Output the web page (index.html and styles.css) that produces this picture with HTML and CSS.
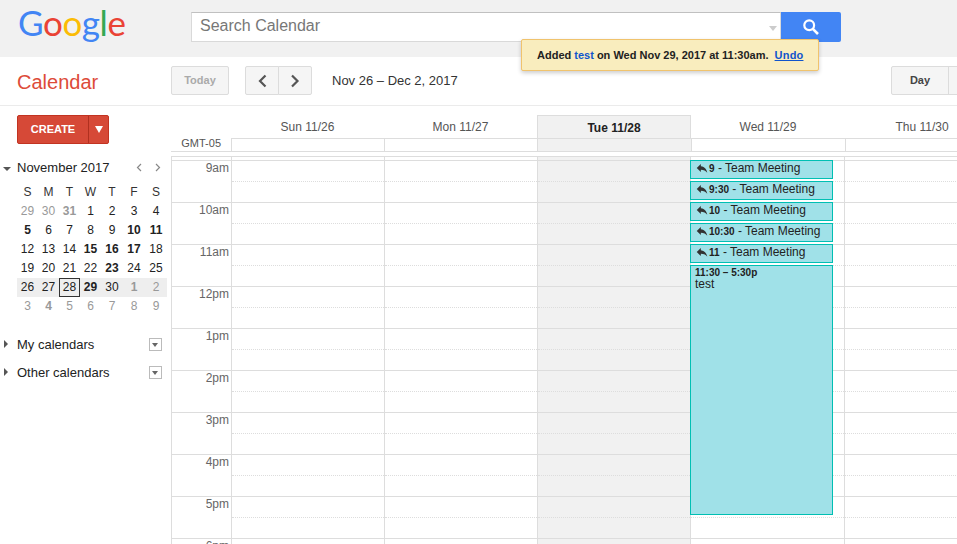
FILE: index.html
```html
<!DOCTYPE html>
<html lang="en">
<head>
<meta charset="utf-8">
<title>Google Calendar</title>
<link rel="stylesheet" href="styles.css">
</head>
<body>
<header class="masthead">
  <div class="logo"><span class="g-blue">G</span><span class="g-red">o</span><span class="g-yellow">o</span><span class="g-blue">g</span><span class="g-green">l</span><span class="g-red">e</span></div>
  <div class="search">
    <div class="search-input"><span class="search-text">Search Calendar</span><i class="search-caret"></i></div>
    <button class="search-btn" aria-label="Search"><svg width="18" height="18" viewBox="0 0 18 18"><circle cx="7.2" cy="7.2" r="4.9" fill="none" stroke="#fff" stroke-width="2.2"/><path d="M10.8 10.8 16 16" stroke="#fff" stroke-width="2.6"/></svg></button>
  </div>
</header>
<div class="notice">Added <span class="notice-link">test</span> on Wed Nov 29, 2017 at 11:30am. <a class="notice-undo">Undo</a></div>
<div class="toolbar">
  <div class="brand">Calendar</div>
  <button class="btn today">Today</button>
  <div class="pager">
    <button class="btn page-btn"><svg width="10" height="14" viewBox="0 0 10 14"><path d="M8.5 1.5 3 7 8.5 12.5" fill="none" stroke="#555" stroke-width="2.2"/></svg></button>
    <button class="btn page-btn next"><svg width="10" height="14" viewBox="0 0 10 14"><path d="M2 1.5 7.5 7 2 12.5" fill="none" stroke="#555" stroke-width="2.2"/></svg></button>
  </div>
  <div class="range">Nov 26 – Dec 2, 2017</div>
  <div class="views"><button class="btn view">Day</button><button class="btn view-next"></button></div>
</div>
<main class="main">
  <aside class="sidebar">
    <div class="create"><span class="create-label">CREATE</span><span class="create-arrow"><i></i></span></div>
    <div class="mini-title">
      <i class="tri-down"></i><span class="mini-month">November 2017</span>
      <svg class="mini-nav" width="6" height="9" viewBox="0 0 6 9"><path d="M5 1 1.5 4.5 5 8" fill="none" stroke="#888" stroke-width="1.2"/></svg>
      <svg class="mini-nav" width="6" height="9" viewBox="0 0 6 9"><path d="M1 1 4.5 4.5 1 8" fill="none" stroke="#888" stroke-width="1.2"/></svg>
    </div>
    <div class="mini-grid">
      <b>S</b><b>M</b><b>T</b><b>W</b><b>T</b><b>F</b><b>S</b>
      <span class="off">29</span><span class="off">30</span><span class="off bold">31</span><span>1</span><span>2</span><span>3</span><span>4</span>
      <span class="bold">5</span><span>6</span><span>7</span><span>8</span><span>9</span><span class="bold">10</span><span class="bold">11</span>
      <span>12</span><span>13</span><span>14</span><span class="bold">15</span><span class="bold">16</span><span class="bold">17</span><span>18</span>
      <span>19</span><span>20</span><span>21</span><span>22</span><span class="bold">23</span><span>24</span><span>25</span>
      <span class="wk">26</span><span class="wk">27</span><span class="wk cur">28</span><span class="wk bold">29</span><span class="wk">30</span><span class="wk off bold">1</span><span class="wk off">2</span>
      <span class="off">3</span><span class="off bold">4</span><span class="off">5</span><span class="off">6</span><span class="off">7</span><span class="off">8</span><span class="off">9</span>
    </div>
    <div class="cal-section first"><i class="tri-right"></i><span class="cal-name">My calendars</span><i class="drop"></i></div>
    <div class="cal-section"><i class="tri-right"></i><span class="cal-name">Other calendars</span><i class="drop"></i></div>
  </aside>
  <section class="calendar">
    <div class="day-heads">
      <div></div>
      <div class="day-head">Sun 11/26</div>
      <div class="day-head">Mon 11/27</div>
      <div class="day-head is-today">Tue 11/28</div>
      <div class="day-head">Wed 11/29</div>
      <div class="day-head">Thu 11/30</div>
    </div>
    <div class="allday">
      <div class="tz">GMT-05</div>
      <div class="ad"></div><div class="ad"></div><div class="ad is-today"></div><div class="ad"></div><div class="ad"></div>
    </div>
    <div class="grid">
      <div class="spacer"><div></div><div></div><div></div><div></div><div></div><div></div></div>
      <div class="row"><div class="t">9am</div><div class="c"></div><div class="c"></div><div class="c td"></div><div class="c"></div><div class="c"></div></div>
      <div class="row"><div class="t">10am</div><div class="c"></div><div class="c"></div><div class="c td"></div><div class="c"></div><div class="c"></div></div>
      <div class="row"><div class="t">11am</div><div class="c"></div><div class="c"></div><div class="c td"></div><div class="c"></div><div class="c"></div></div>
      <div class="row"><div class="t">12pm</div><div class="c"></div><div class="c"></div><div class="c td"></div><div class="c"></div><div class="c"></div></div>
      <div class="row"><div class="t">1pm</div><div class="c"></div><div class="c"></div><div class="c td"></div><div class="c"></div><div class="c"></div></div>
      <div class="row"><div class="t">2pm</div><div class="c"></div><div class="c"></div><div class="c td"></div><div class="c"></div><div class="c"></div></div>
      <div class="row"><div class="t">3pm</div><div class="c"></div><div class="c"></div><div class="c td"></div><div class="c"></div><div class="c"></div></div>
      <div class="row"><div class="t">4pm</div><div class="c"></div><div class="c"></div><div class="c td"></div><div class="c"></div><div class="c"></div></div>
      <div class="row"><div class="t">5pm</div><div class="c"></div><div class="c"></div><div class="c td"></div><div class="c"></div><div class="c"></div></div>
      <div class="row"><div class="t">6pm</div><div class="c"></div><div class="c"></div><div class="c td"></div><div class="c"></div><div class="c"></div></div>
      <div class="events">
        <div class="ev"><svg class="reply" viewBox="0 0 24 24"><path d="M10 9V5l-7 7 7 7v-4.1c5 0 8.5 1.6 11 5.1-1-5-4-10-11-11z"/></svg><span class="ev-time">9</span> - Team Meeting</div>
        <div class="ev"><svg class="reply" viewBox="0 0 24 24"><path d="M10 9V5l-7 7 7 7v-4.1c5 0 8.5 1.6 11 5.1-1-5-4-10-11-11z"/></svg><span class="ev-time">9:30</span> - Team Meeting</div>
        <div class="ev"><svg class="reply" viewBox="0 0 24 24"><path d="M10 9V5l-7 7 7 7v-4.1c5 0 8.5 1.6 11 5.1-1-5-4-10-11-11z"/></svg><span class="ev-time">10</span> - Team Meeting</div>
        <div class="ev"><svg class="reply" viewBox="0 0 24 24"><path d="M10 9V5l-7 7 7 7v-4.1c5 0 8.5 1.6 11 5.1-1-5-4-10-11-11z"/></svg><span class="ev-time">10:30</span> - Team Meeting</div>
        <div class="ev"><svg class="reply" viewBox="0 0 24 24"><path d="M10 9V5l-7 7 7 7v-4.1c5 0 8.5 1.6 11 5.1-1-5-4-10-11-11z"/></svg><span class="ev-time">11</span> - Team Meeting</div>
        <div class="ev ev-long"><div class="ev-time">11:30 – 5:30p</div><div class="ev-title">test</div></div>
      </div>
    </div>
  </section>
</main>
</body>
</html>
```
FILE: styles.css
```css
* { box-sizing: border-box; }
html, body { margin: 0; height: 544px; overflow: hidden; background: #fff; }
body { position: relative; font-family: "Liberation Sans", Arial, sans-serif; color: #222; }
i { display: block; }
button { font-family: inherit; padding: 0; margin: 0; }

.masthead { height: 57px; background: #f1f1f1; display: flex; align-items: flex-start; padding: 0 116px 0 18px; }
.logo { width: 173px; flex: none; font-family: Lato, sans-serif; font-size: 35px; line-height: 45px; letter-spacing: -.4px; }
.g-blue { color: #4285f4; } .g-red { color: #ea4335; } .g-yellow { color: #fbbc05; } .g-green { color: #34a853; }
.search { display: flex; margin-top: 12px; height: 30px; }
.search-input { width: 590px; background: #fff; border: 1px solid #d9d9d9; border-top-color: #c0c0c0; display: flex; align-items: center; justify-content: space-between; padding: 0 3px 0 8px; font-size: 16px; color: #777; }
.search-text { margin-top: -2px; }
.search-caret { width: 0; height: 0; border: 4px solid transparent; border-top: 5px solid #ccc; border-bottom: 0; margin-top: 2px; }
.search-btn { width: 60px; background: #4285f4; border: 0; border-radius: 0 2px 2px 0; display: flex; align-items: center; justify-content: center; }

.notice { position: absolute; left: 521px; top: 39px; width: 298px; height: 32px; background: #f9edbe; border: 1px solid #f0c36d; border-radius: 2px; box-shadow: 0 2px 4px rgba(0,0,0,.2); font-size: 11px; font-weight: bold; line-height: 30px; padding-left: 15px; white-space: nowrap; }
.notice-link { color: #15c; }
.notice-undo { color: #15c; text-decoration: underline; margin-left: 3px; letter-spacing: .2px; }

.toolbar { height: 49px; border-bottom: 1px solid #ebebeb; display: flex; align-items: flex-start; padding: 9px 0 0 17px; overflow: hidden; }
.toolbar > * { flex: none; }
.brand { width: 154px; font-size: 20px; line-height: 32px; color: #dd4b39; }
.btn { height: 29px; background: #f5f5f5; border: 1px solid #dcdcdc; border-radius: 2px; font-size: 11px; font-weight: bold; color: #444; padding-bottom: 2px; }
.today { width: 58px; color: #aaa; margin-right: 16px; }
.pager { display: flex; margin-right: 20px; }
.page-btn { width: 34px; padding-bottom: 0; border-radius: 2px 0 0 2px; display: flex; align-items: center; justify-content: center; }
.page-btn.next { margin-left: -1px; border-radius: 0 2px 2px 0; }
.range { width: 559px; font-size: 13px; line-height: 29px; color: #333; }
.views { display: flex; }
.view { width: 58px; flex: none; border-radius: 2px 0 0 2px; }
.view-next { width: 20px; flex: none; margin-left: -1px; border-radius: 0; }

.main { display: flex; }
.sidebar { width: 171px; flex: none; padding: 9px 0 0 17px; }
.create { width: 92px; height: 29px; background: #d64937; border: 1px solid #c23321; border-radius: 2px; display: flex; color: #fff; font-size: 11px; font-weight: bold; }
.create-label { width: 71px; text-align: center; line-height: 27px; border-right: 1px solid #b0301f; }
.create-arrow { flex: 1; display: flex; align-items: center; justify-content: center; }
.create-arrow i { width: 0; height: 0; border: 4px solid transparent; border-top: 7px solid #fff; border-bottom: 0; }

.mini-title { display: flex; align-items: center; height: 19px; margin: 14px 0 0 -14px; }
.tri-down { width: 0; height: 0; border: 4px solid transparent; border-top: 4px solid #555; border-bottom: 0; margin: 2px 6px 0 0; flex: none; }
.mini-month { width: 119px; flex: none; font-size: 13px; color: #222; }
.mini-nav { flex: none; }
.mini-nav + .mini-nav { margin-left: 13px; }
.mini-grid { display: grid; grid-template-columns: 21px 21px 21px 21px 22px 22px 22px; grid-auto-rows: 19px; width: 150px; margin-top: 6px; font-size: 12px; text-align: center; line-height: 19px; }
.mini-grid b { font-weight: normal; color: #333; }
.off { color: #999; }
.bold { font-weight: bold; }
.wk { background: #eee; }
.cur { border: 1px solid #333; line-height: 17px; }

.cal-section { display: flex; align-items: center; height: 28px; margin-left: -14px; width: 159px; }
.cal-section.first { margin-top: 14px; }
.tri-right { width: 0; height: 0; border: 4px solid transparent; border-left: 4px solid #555; border-right: 0; margin-right: 9px; margin-left: 1px; flex: none; }
.cal-name { flex: 1; font-size: 13px; }
.drop { width: 13px; height: 13px; border: 1px solid #bbb; position: relative; background: #fff; }
.drop::after { content: ""; position: absolute; left: 2px; top: 4px; width: 0; height: 0; border: 3.5px solid transparent; border-top: 4px solid #666; border-bottom: 0; }

.calendar { flex: 1; min-width: 0; overflow: hidden; }
.day-heads { display: grid; grid-template-columns: 60px 153px 153px 154px 154px 154px; height: 32px; padding-top: 9px; }
.day-head { font-size: 12px; line-height: 25px; text-align: center; color: #555; }
.day-head.is-today { background: #f1f1f1; border: 1px solid #ddd; border-bottom: 0; line-height: 23px; padding-top: 1px; font-weight: bold; color: #222; }
.allday { display: grid; grid-template-columns: 60px 153px 153px 154px 154px 154px; height: 14px; border-bottom: 1px solid #ddd; }
.tz { font-size: 11px; line-height: 11px; color: #555; text-align: right; padding-right: 10px; }
.ad { border: 1px solid #ddd; border-bottom: 0; border-right: 0; }
.ad.is-today { background: #f1f1f1; }

.grid { position: relative; margin-top: 4px; border-left: 1px solid #ddd; width: 827px; }
.spacer, .row { display: grid; grid-template-columns: 59px 153px 153px 153px 154px 154px; }
.spacer { height: 4px; border-top: 1px solid #ddd; }
.spacer div + div { border-left: 1px solid #ddd; }
.spacer div:nth-child(4) { background: #f1f1f1; }
.row { height: 42px; border-top: 1px solid #ddd; }
.t { font-size: 12px; line-height: 14px; padding-right: 2px; text-align: right; color: #666; }
.c { border-left: 1px solid #ddd; height: 41px; position: relative; }
.c::after { content: ""; position: absolute; left: 0; right: 0; top: 20px; border-top: 1px dotted #ddd; }
.td { background: #f1f1f1; }

.events { position: absolute; left: 518px; top: 4px; width: 143px; display: flex; flex-direction: column; gap: 2px; }
.ev { height: 19px; background: #a0e1e8; border: 1px solid #00bfb3; padding-left: 4px; font-size: 12px; line-height: 14px; color: #222; white-space: pre; display: flex; align-items: flex-start; }
.ev-time { font-size: 10px; font-weight: bold; }
.ev > .ev-time { line-height: 15px; }
.reply { width: 14px; height: 14px; fill: #333; flex: none; }
.ev-long { height: 250px; display: block; padding: 1px 0 0 4px; }
.ev-long .ev-time { line-height: 11px; }
.ev-title { font-size: 12px; line-height: 13px; }
```
